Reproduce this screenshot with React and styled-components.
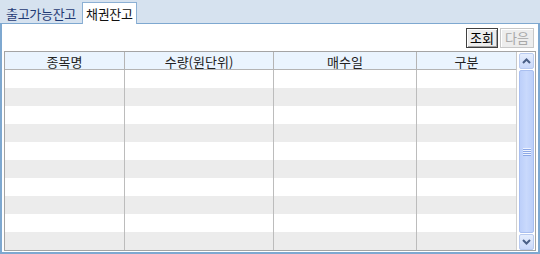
import React from "react";
import styled, { createGlobalStyle } from "styled-components";

const Global = createGlobalStyle`
  html, body { margin: 0; padding: 0; background: #fff; }
  body { font-family: "Noto Sans CJK KR", "Noto Sans", sans-serif; font-size: 12px; }
  #root { width: 540px; height: 254px; }
`;

const Frame = styled.div`
  width: 540px;
  height: 254px;
  display: flex;
  flex-direction: column;
  background: #d6e2ef;
  box-sizing: border-box;
`;

const TabBar = styled.div`
  height: 23px;
  display: flex;
  align-items: flex-end;
  padding-left: 2px;
  gap: 2px;
  position: relative;
  z-index: 1;
`;

const Tab = styled.div`
  box-sizing: border-box;
  height: ${(p) => (p.$active ? "22px" : "20px")};
  padding: 0 ${(p) => (p.$active ? "3px" : "4px")};
  display: flex;
  align-items: center;
  font-size: 13px;
  letter-spacing: -0.3px;
  color: ${(p) => (p.$active ? "#111" : "#1f3a74")};
  background: ${(p) => (p.$active ? "#fff" : "transparent")};
  border: ${(p) => (p.$active ? "1px solid #8cb0d4" : "none")};
  border-bottom: none;
  margin-bottom: ${(p) => (p.$active ? "-1px" : "0")};
`;

const Panel = styled.div`
  flex: 1;
  background: #fff;
  border: 1px solid #7ea8d0;
  border-left-width: 2px;
  border-right-width: 2px;
  border-bottom-width: 2px;
  display: flex;
  flex-direction: column;
  box-sizing: border-box;
`;

const Toolbar = styled.div`
  height: 26px;
  display: flex;
  justify-content: flex-end;
  align-items: center;
  gap: 2px;
  padding: 1px 4px 0 0;
  box-sizing: border-box;
`;

const Button = styled.button`
  box-sizing: border-box;
  height: 20px;
  width: ${(p) => p.$w}px;
  padding: 0;
  font-family: inherit;
  font-size: 13px;
  background: #ededed;
  color: ${(p) => (p.$disabled ? "#a8a8a8" : "#000")};
  border: 1px solid ${(p) => (p.$disabled ? "#c8c8c8" : "#404040")};
  box-shadow: ${(p) => (p.$disabled ? "inset 1px 1px #fff" : "inset 1px 1px #fff, inset -1px -1px #a0a0a0")};
  display: flex;
  align-items: center;
  justify-content: center;
`;

const GridBox = styled.div`
  margin: 1px 2px 0 2px;
  height: 200px;
  border: 1px solid #a4a4a4;
  box-sizing: border-box;
  display: flex;
`;

const Table = styled.div`
  flex: 1;
  display: flex;
  flex-direction: column;
`;

const cols = "120px 149px 143px 1fr";

const HeaderRow = styled.div`
  display: grid;
  grid-template-columns: ${cols};
  height: 18px;
  box-sizing: border-box;
  background: #eaf4fe;
  border-bottom: 1px solid #b4b4b4;
`;

const HeaderCell = styled.div`
  display: flex;
  align-items: center;
  justify-content: center;
  font-size: 13px;
  color: #222;
  border-right: 1px solid #b4b4b4;
  &:last-child { border-right: 1px solid #c8c8c8; }
`;

const Row = styled.div`
  display: grid;
  grid-template-columns: ${cols};
  height: 18px;
  background: ${(p) => (p.$alt ? "#ececec" : "#fff")};
`;

const Cell = styled.div`
  border-right: 1px solid #bcbcbc;
  &:last-child { border-right: 1px solid #d0d0d0; }
`;

const Scroll = styled.div`
  width: 18px;
  display: flex;
  flex-direction: column;
  padding: 1px 1px 0 2px;
  box-sizing: border-box;
  background: #fff;
  gap: 1px;
`;

const ScrollBtn = styled.div`
  height: 16px;
  box-sizing: border-box;
  border: 1px solid #b9cbf0;
  border-radius: 2px;
  background: linear-gradient(#e6eefd, #c9d8fa);
  display: flex;
  align-items: center;
  justify-content: center;
`;

const Thumb = styled.div`
  flex: 1;
  box-sizing: border-box;
  border: 1px solid #a9bff0;
  border-radius: 2px;
  background: linear-gradient(90deg, #bccffa, #c9d9fc 50%, #bccffa);
  display: flex;
  align-items: center;
  justify-content: center;
`;

const Chevron = ({ up }) => (
  <svg width="9" height="6" viewBox="0 0 9 6">
    <path
      d={up ? "M1 5 L4.5 1.5 L8 5" : "M1 1 L4.5 4.5 L8 1"}
      fill="none"
      stroke="#4a5f86"
      strokeWidth="2"
    />
  </svg>
);

const Grip = () => (
  <svg width="8" height="8" viewBox="0 0 8 8">
    {[0, 2, 4, 6].map((y) => (
      <rect key={y} x="0" y={y} width="8" height="1" fill="#eef3fe" />
    ))}
    {[1, 3, 5, 7].map((y) => (
      <rect key={y} x="0" y={y} width="8" height="1" fill="#8ca8e6" />
    ))}
  </svg>
);

const headers = ["종목명", "수량(원단위)", "매수일", "구분"];

export default function App() {
  return (
    <>
      <Global />
      <Frame>
        <TabBar>
          <Tab>출고가능잔고</Tab>
          <Tab $active>채권잔고</Tab>
        </TabBar>
        <Panel>
          <Toolbar>
            <Button $w={32}>조회</Button>
            <Button $w={34} $disabled>다음</Button>
          </Toolbar>
          <GridBox>
            <Table>
              <HeaderRow>
                {headers.map((h) => (
                  <HeaderCell key={h}>{h}</HeaderCell>
                ))}
              </HeaderRow>
              {Array.from({ length: 10 }).map((_, i) => (
                <Row key={i} $alt={i % 2 === 1}>
                  {headers.map((h) => (
                    <Cell key={h} />
                  ))}
                </Row>
              ))}
            </Table>
            <Scroll>
              <ScrollBtn>
                <Chevron up />
              </ScrollBtn>
              <Thumb>
                <Grip />
              </Thumb>
              <ScrollBtn>
                <Chevron />
              </ScrollBtn>
            </Scroll>
          </GridBox>
        </Panel>
      </Frame>
    </>
  );
}
